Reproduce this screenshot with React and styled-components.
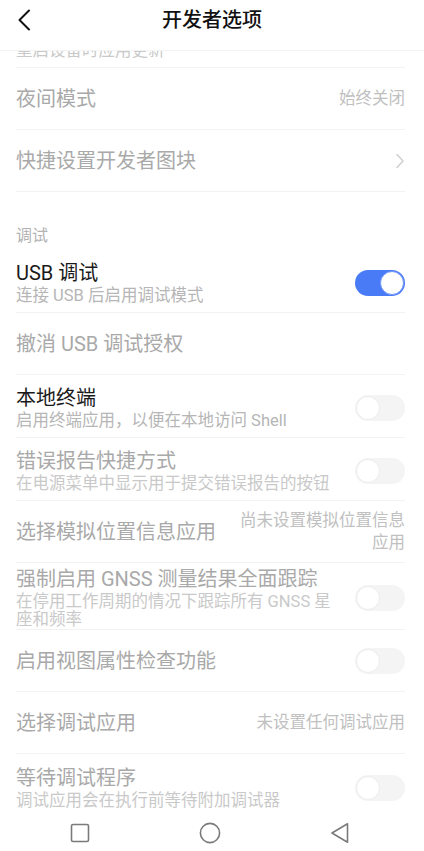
import React from "react";
import styled, { createGlobalStyle } from "styled-components";

const GlobalStyle = createGlobalStyle`
  html, body {
    margin: 0;
    padding: 0;
    background: #fff;
  }
  body {
    font-family: "Roboto", "Noto Sans CJK SC", sans-serif;
    -webkit-font-smoothing: antialiased;
  }
`;

const Screen = styled.div`
  width: 424px;
  height: 851px;
  display: flex;
  flex-direction: column;
  background: #fff;
  overflow: hidden;
`;

const Header = styled.header`
  position: relative;
  z-index: 2;
  height: 50px;
  flex-shrink: 0;
  display: flex;
  align-items: flex-start;
  justify-content: center;
  background: #fff;
  border-bottom: 1px solid #f3f3f3;
`;

const BackButton = styled.button`
  position: absolute;
  left: 14px;
  top: 8px;
  width: 20px;
  height: 24px;
  padding: 0;
  border: 0;
  background: none;
  display: flex;
  align-items: center;
  justify-content: center;
`;

const Title = styled.h1`
  margin: 7px 0 0;
  font-size: 20px;
  font-weight: 500;
  color: #111;
  line-height: 26px;
`;

const Scroller = styled.div`
  flex: 1;
  overflow: hidden;
`;

const List = styled.div`
  margin-top: -46px;
  padding: 0 19px 0 16px;
`;

const Row = styled.div`
  box-sizing: border-box;
  min-height: ${(p) => (p.$sub ? 63 : 62)}px;
  padding-top: ${(p) => (p.$sub ? 4 : 0)}px;
  display: flex;
  align-items: center;
  border-bottom: ${(p) => (p.$last ? "none" : "1px solid #f2f2f2")};
`;

const Texts = styled.div`
  flex: 1;
  min-width: 0;
  margin-right: 18px;
`;

const ItemTitle = styled.div`
  font-size: 20px;
  line-height: 24px;
  color: ${(p) => (p.$on ? "#1a1a1a" : "#a9a9a9")};
  white-space: nowrap;
`;

const ItemSub = styled.div`
  margin-top: 2px;
  font-size: 16.5px;
  line-height: 18px;
  color: ${(p) => (p.$on ? "#b6b6b6" : "#c9c9c9")};
`;

const Value = styled.div`
  max-width: 170px;
  text-align: right;
  font-size: 16.5px;
  line-height: 22px;
  color: #c0c0c0;
`;

const SectionLabel = styled.div`
  padding: 34px 0 4px;
  font-size: 16px;
  line-height: 20px;
  color: #b3b3b3;
`;

const Track = styled.div`
  position: relative;
  flex-shrink: 0;
  width: 50px;
  height: 26px;
  border-radius: 13px;
  box-sizing: border-box;
  background: ${(p) => (p.$on ? "#4a7bf6" : "#f1f1f1")};
  opacity: ${(p) => (p.$on ? 1 : 0.75)};
`;

const Knob = styled.span`
  position: absolute;
  top: 1px;
  left: ${(p) => (p.$on ? "25px" : "1px")};
  width: 24px;
  height: 24px;
  border-radius: 50%;
  box-sizing: border-box;
  background: #fff;
  border: 1px solid ${(p) => (p.$on ? "#6d95f8" : "#e6e6e6")};
`;

const NavBar = styled.nav`
  height: 41px;
  flex-shrink: 0;
  display: flex;
  align-items: center;
  background: #fff;
`;

const NavSlot = styled.div`
  flex: 0 0 ${(p) => p.$w}px;
  display: flex;
  justify-content: center;
  align-items: center;
  padding-top: 4px;
`;

const Toggle = ({ on }) => (
  <Track $on={on}>
    <Knob $on={on} />
  </Track>
);

const Chevron = () => (
  <svg width="10" height="16" viewBox="0 0 10 16">
    <path d="M2 1.5 L8 8 L2 14.5" fill="none" stroke="#cfcfcf" strokeWidth="1.5" strokeLinecap="round" strokeLinejoin="round" />
  </svg>
);

const items = [
  { title: "自动系统更新", sub: "重启设备时应用更新" },
  { title: "夜间模式", value: "始终关闭" },
  { title: "快捷设置开发者图块", chevron: true },
  { section: "调试" },
  { title: "USB 调试", sub: "连接 USB 后启用调试模式", on: true, toggle: true, checked: true },
  { title: "撤消 USB 调试授权" },
  { title: "本地终端", sub: "启用终端应用，以便在本地访问 Shell", on: true, toggle: true },
  { title: "错误报告快捷方式", sub: "在电源菜单中显示用于提交错误报告的按钮", toggle: true },
  { title: "选择模拟位置信息应用", value: "尚未设置模拟位置信息应用" },
  { title: "强制启用 GNSS 测量结果全面跟踪", sub: "在停用工作周期的情况下跟踪所有 GNSS 星座和频率", toggle: true },
  { title: "启用视图属性检查功能", toggle: true },
  { title: "选择调试应用", value: "未设置任何调试应用" },
  { title: "等待调试程序", sub: "调试应用会在执行前等待附加调试器", toggle: true, last: true },
];

export default function App() {
  return (
    <>
      <GlobalStyle />
      <Screen>
        <Header>
          <BackButton aria-label="返回">
            <svg width="16" height="24" viewBox="0 0 16 24">
              <path d="M13 2.5 L3.5 12 L13 21.5" fill="none" stroke="#111" strokeWidth="2" strokeLinecap="round" strokeLinejoin="round" />
            </svg>
          </BackButton>
          <Title>开发者选项</Title>
        </Header>

        <Scroller>
          <List>
            {items.map((it, i) =>
              it.section ? (
                <SectionLabel key={i}>{it.section}</SectionLabel>
              ) : (
                <Row key={i} $sub={!!it.sub} $last={it.last}>
                  <Texts>
                    <ItemTitle $on={it.on}>{it.title}</ItemTitle>
                    {it.sub && <ItemSub $on={it.on}>{it.sub}</ItemSub>}
                  </Texts>
                  {it.value && <Value>{it.value}</Value>}
                  {it.chevron && <Chevron />}
                  {it.toggle && <Toggle on={it.checked} />}
                </Row>
              )
            )}
          </List>
        </Scroller>

        <NavBar>
          <NavSlot $w={160}>
            <svg width="20" height="20" viewBox="0 0 20 20">
              <rect x="1.5" y="1.5" width="17" height="17" rx="1.5" fill="none" stroke="#7a7a7a" strokeWidth="1.6" />
            </svg>
          </NavSlot>
          <NavSlot $w={100}>
            <svg width="22" height="22" viewBox="0 0 22 22">
              <circle cx="11" cy="11" r="9.6" fill="none" stroke="#7a7a7a" strokeWidth="1.6" />
            </svg>
          </NavSlot>
          <NavSlot $w={160}>
            <svg width="20" height="22" viewBox="0 0 20 22">
              <path d="M17.5 1.8 L2 11 L17.5 20.2 Z" fill="none" stroke="#7a7a7a" strokeWidth="1.6" strokeLinejoin="round" />
            </svg>
          </NavSlot>
        </NavBar>
      </Screen>
    </>
  );
}
